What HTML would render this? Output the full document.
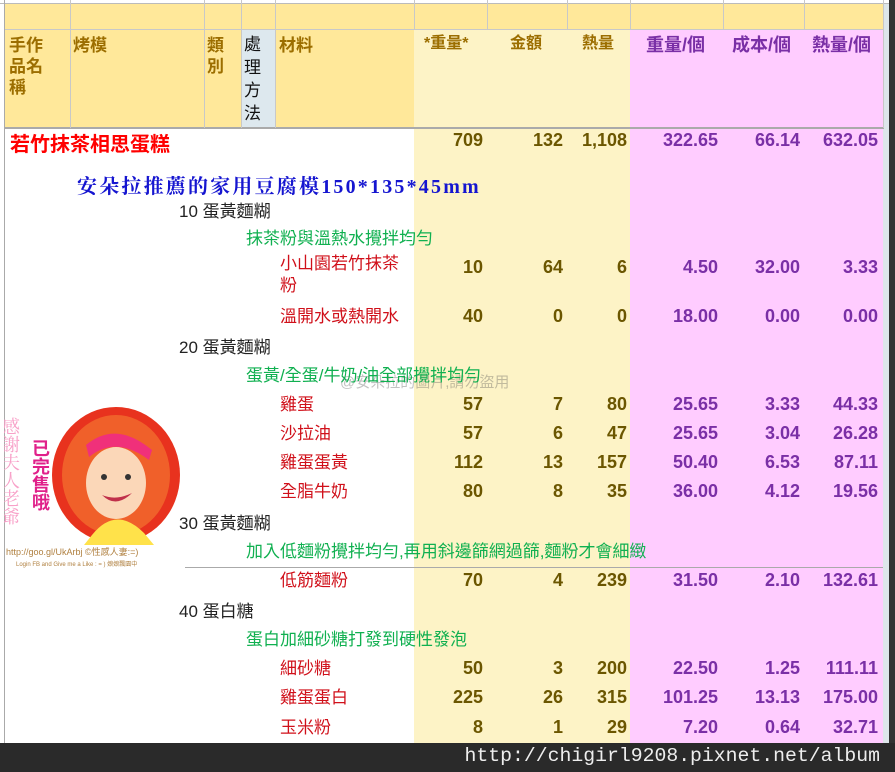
<!DOCTYPE html><html><head><meta charset="utf-8"><style>
body{margin:0;width:895px;height:772px;overflow:hidden;background:#fff;position:relative;font-family:"Liberation Sans","Noto Sans CJK TC",sans-serif}
div{position:absolute;white-space:nowrap}
.b{font-weight:bold}
.h{color:#9C6E00;font-weight:bold;font-size:17px;line-height:21px}
.n{color:#6B5600;font-weight:bold;font-size:18px;text-align:right}
.p{color:#7A2FA6;font-weight:bold;font-size:18px;text-align:right}
.r{color:#D0101A;font-size:17px;margin-top:-4px}
.g{color:#10B050;font-size:17px;margin-top:-3px}
.k{color:#222;font-size:17px;margin-top:-2px}
</style></head><body>
<div style="left:4px;top:3px;width:880px;height:27px;background:#FFE89A"></div>
<div style="left:4px;top:30px;width:410px;height:98px;background:#FFE89A"></div>
<div style="left:241px;top:30px;width:34px;height:98px;background:#DDE8EE"></div>
<div style="left:414px;top:30px;width:216px;height:713px;background:#FDF3C6"></div>
<div style="left:630px;top:30px;width:253px;height:713px;background:#FFCCFF"></div>
<div style="left:883px;top:0;width:6px;height:743px;background:#DDE6EA"></div>
<div style="left:889px;top:0;width:6px;height:772px;background:#333"></div>
<div style="left:0;top:0;width:889px;height:3px;background:#fff;border-bottom:1px solid #bbb"></div>
<div style="left:4px;top:29px;width:880px;height:1px;background:#c8c8c8"></div>
<div style="left:4px;top:127px;width:880px;height:2px;background:#aaa"></div>
<div style="left:4px;top:0;width:1px;height:743px;background:#aaa"></div>
<div style="left:70px;top:0;width:1px;height:128px;background:#c8c8c8"></div>
<div style="left:204px;top:0;width:1px;height:128px;background:#c8c8c8"></div>
<div style="left:241px;top:0;width:1px;height:128px;background:#c8c8c8"></div>
<div style="left:275px;top:0;width:1px;height:128px;background:#c8c8c8"></div>
<div style="left:414px;top:0;width:1px;height:30px;background:#c8c8c8"></div>
<div style="left:487px;top:0;width:1px;height:30px;background:#c8c8c8"></div>
<div style="left:567px;top:0;width:1px;height:30px;background:#c8c8c8"></div>
<div style="left:630px;top:0;width:1px;height:30px;background:#c8c8c8"></div>
<div style="left:723px;top:0;width:1px;height:30px;background:#c8c8c8"></div>
<div style="left:804px;top:0;width:1px;height:30px;background:#c8c8c8"></div>
<div style="left:883px;top:0;width:1px;height:128px;background:#c8c8c8"></div>
<div style="left:185px;top:567px;width:698px;height:1px;background:#aaa"></div>
<div class="h" style="left:9px;top:35px;white-space:normal;width:50px">手作<br>品名<br>稱</div>
<div class="h" style="left:73px;top:35px">烤模</div>
<div class="h" style="left:207px;top:35px">類<br>別</div>
<div style="left:244px;top:33px;font-size:17px;line-height:23px;color:#111">處<br>理<br>方<br>法</div>
<div class="h" style="left:279px;top:35px">材料</div>
<div class="h" style="left:424px;top:33px;font-size:16px">*重量*</div>
<div class="h" style="left:510px;top:33px;font-size:16px">金額</div>
<div class="h" style="left:582px;top:33px;font-size:16px">熱量</div>
<div class="h" style="left:646px;top:35px;color:#7A2FA6;font-size:18px">重量/個</div>
<div class="h" style="left:732px;top:35px;color:#7A2FA6;font-size:18px">成本/個</div>
<div class="h" style="left:812px;top:35px;color:#7A2FA6;font-size:18px">熱量/個</div>
<div class="b" style="left:10px;top:128px;color:#f00;font-size:20px">若竹抹茶相思蛋糕</div>
<div class="b" style="left:77px;top:170px;color:#1515d0;font-size:20px;font-family:'Liberation Serif','Noto Serif CJK SC',serif;letter-spacing:2.2px">安朵拉推薦的家用豆腐模150*135*45mm</div>
<div style="left:340px;top:371px;color:rgba(80,80,80,.35);font-size:15px">@安朵拉的圖片,請勿盜用</div>
<svg style="position:absolute;left:4px;top:405px" width="180" height="165">
<ellipse cx="112" cy="70" rx="64" ry="68" fill="#E8321E"/>
<ellipse cx="112" cy="70" rx="54" ry="60" fill="#F0602A"/>
<path d="M88 130 Q112 100 140 128 L150 140 L80 140Z" fill="#FFE24A"/>
<ellipse cx="112" cy="78" rx="30" ry="36" fill="#FBD7B8"/>
<path d="M82 40 Q112 15 148 45 L145 55 Q112 30 85 52Z" fill="#F0307A"/>
<path d="M98 90 Q112 104 128 88 Q112 96 98 90Z" fill="#c0304a"/>
<circle cx="100" cy="72" r="3" fill="#333"/><circle cx="124" cy="72" r="3" fill="#333"/>
<text x="6" y="12" fill="#f8a0c8" font-size="18" font-family="Liberation Serif,Noto Serif CJK SC,serif" writing-mode="tb">感謝夫人老爺</text>
<text x="37" y="34" fill="#e0208a" font-size="18" font-weight="bold" font-family="Noto Sans CJK TC,sans-serif" writing-mode="tb">已完售哦</text>
<text x="2" y="150" fill="#b08040" font-size="9">http://goo.gl/UkArbj ©性感人妻:=)</text>
<text x="12" y="161" fill="#b08040" font-size="6">Login FB and Give me a Like : = )  娘娘飄園中</text>
</svg>
<div class="n" style="left:420px;top:130px;width:63px">709</div>
<div class="n" style="left:490px;top:130px;width:73px">132</div>
<div class="n" style="left:560px;top:130px;width:67px">1,108</div>
<div class="p" style="left:640px;top:130px;width:78px">322.65</div>
<div class="p" style="left:730px;top:130px;width:70px">66.14</div>
<div class="p" style="left:808px;top:130px;width:70px">632.05</div>
<div class="k" style="left:179px;top:199px">10 蛋黃麵糊</div>
<div class="g" style="left:246px;top:227px">抹茶粉與溫熱水攪拌均勻</div>
<div class="r" style="left:280px;top:257px;line-height:22px">小山園若竹抹茶<br>粉</div>
<div class="k" style="left:179px;top:335px">20 蛋黃麵糊</div>
<div class="g" style="left:246px;top:364px">蛋黃/全蛋/牛奶/油全部攪拌均勻</div>
<div class="k" style="left:179px;top:511px">30 蛋黃麵糊</div>
<div class="g" style="left:246px;top:540px">加入低麵粉攪拌均勻,再用斜邊篩網過篩,麵粉才會細緻</div>
<div class="k" style="left:179px;top:599px">40 蛋白糖</div>
<div class="g" style="left:246px;top:628px">蛋白加細砂糖打發到硬性發泡</div>
<div class="r" style="left:280px;top:306px">溫開水或熱開水</div>
<div class="r" style="left:280px;top:394px">雞蛋</div>
<div class="r" style="left:280px;top:423px">沙拉油</div>
<div class="r" style="left:280px;top:452px">雞蛋蛋黃</div>
<div class="r" style="left:280px;top:481px">全脂牛奶</div>
<div class="r" style="left:280px;top:570px">低筋麵粉</div>
<div class="r" style="left:280px;top:658px">細砂糖</div>
<div class="r" style="left:280px;top:687px">雞蛋蛋白</div>
<div class="r" style="left:280px;top:717px">玉米粉</div>
<div class="n" style="left:420px;top:257px;width:63px">10</div><div class="n" style="left:490px;top:257px;width:73px">64</div><div class="n" style="left:570px;top:257px;width:57px">6</div><div class="p" style="left:640px;top:257px;width:78px">4.50</div><div class="p" style="left:730px;top:257px;width:70px">32.00</div><div class="p" style="left:808px;top:257px;width:70px">3.33</div>
<div class="n" style="left:420px;top:306px;width:63px">40</div><div class="n" style="left:490px;top:306px;width:73px">0</div><div class="n" style="left:570px;top:306px;width:57px">0</div><div class="p" style="left:640px;top:306px;width:78px">18.00</div><div class="p" style="left:730px;top:306px;width:70px">0.00</div><div class="p" style="left:808px;top:306px;width:70px">0.00</div>
<div class="n" style="left:420px;top:394px;width:63px">57</div><div class="n" style="left:490px;top:394px;width:73px">7</div><div class="n" style="left:570px;top:394px;width:57px">80</div><div class="p" style="left:640px;top:394px;width:78px">25.65</div><div class="p" style="left:730px;top:394px;width:70px">3.33</div><div class="p" style="left:808px;top:394px;width:70px">44.33</div>
<div class="n" style="left:420px;top:423px;width:63px">57</div><div class="n" style="left:490px;top:423px;width:73px">6</div><div class="n" style="left:570px;top:423px;width:57px">47</div><div class="p" style="left:640px;top:423px;width:78px">25.65</div><div class="p" style="left:730px;top:423px;width:70px">3.04</div><div class="p" style="left:808px;top:423px;width:70px">26.28</div>
<div class="n" style="left:420px;top:452px;width:63px">112</div><div class="n" style="left:490px;top:452px;width:73px">13</div><div class="n" style="left:570px;top:452px;width:57px">157</div><div class="p" style="left:640px;top:452px;width:78px">50.40</div><div class="p" style="left:730px;top:452px;width:70px">6.53</div><div class="p" style="left:808px;top:452px;width:70px">87.11</div>
<div class="n" style="left:420px;top:481px;width:63px">80</div><div class="n" style="left:490px;top:481px;width:73px">8</div><div class="n" style="left:570px;top:481px;width:57px">35</div><div class="p" style="left:640px;top:481px;width:78px">36.00</div><div class="p" style="left:730px;top:481px;width:70px">4.12</div><div class="p" style="left:808px;top:481px;width:70px">19.56</div>
<div class="n" style="left:420px;top:570px;width:63px">70</div><div class="n" style="left:490px;top:570px;width:73px">4</div><div class="n" style="left:570px;top:570px;width:57px">239</div><div class="p" style="left:640px;top:570px;width:78px">31.50</div><div class="p" style="left:730px;top:570px;width:70px">2.10</div><div class="p" style="left:808px;top:570px;width:70px">132.61</div>
<div class="n" style="left:420px;top:658px;width:63px">50</div><div class="n" style="left:490px;top:658px;width:73px">3</div><div class="n" style="left:570px;top:658px;width:57px">200</div><div class="p" style="left:640px;top:658px;width:78px">22.50</div><div class="p" style="left:730px;top:658px;width:70px">1.25</div><div class="p" style="left:808px;top:658px;width:70px">111.11</div>
<div class="n" style="left:420px;top:687px;width:63px">225</div><div class="n" style="left:490px;top:687px;width:73px">26</div><div class="n" style="left:570px;top:687px;width:57px">315</div><div class="p" style="left:640px;top:687px;width:78px">101.25</div><div class="p" style="left:730px;top:687px;width:70px">13.13</div><div class="p" style="left:808px;top:687px;width:70px">175.00</div>
<div class="n" style="left:420px;top:717px;width:63px">8</div><div class="n" style="left:490px;top:717px;width:73px">1</div><div class="n" style="left:570px;top:717px;width:57px">29</div><div class="p" style="left:640px;top:717px;width:78px">7.20</div><div class="p" style="left:730px;top:717px;width:70px">0.64</div><div class="p" style="left:808px;top:717px;width:70px">32.71</div>
<div style="left:0;top:743px;width:895px;height:29px;background:#2a2a2a"></div>
<div style="left:440px;top:745px;width:440px;text-align:right;color:#eee;font-family:'Liberation Mono',monospace;font-size:19.8px">http://chigirl9208.pixnet.net/album</div>
</body></html>
